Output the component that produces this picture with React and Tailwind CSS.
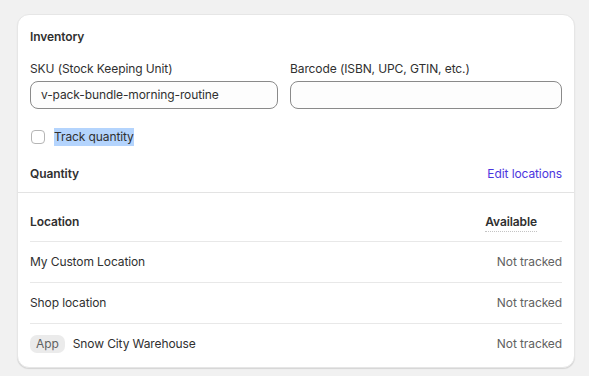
import React from 'react'

const locations = [
  { name: 'My Custom Location' },
  { name: 'Shop location' },
  { name: 'Snow City Warehouse', app: true },
]

function LocationRow({ loc }) {
  return (
    <div className="flex items-center justify-between h-[41px] border-t border-[#e8e8e8]">
      <div className="flex items-center gap-[8px]">
        {loc.app && (
          <span className="flex items-center h-[18px] px-[6px] rounded-[7px] bg-[#ebebeb] text-[12px] text-[#616161]">
            App
          </span>
        )}
        <span className="text-[#303030]">{loc.name}</span>
      </div>
      <span className="text-[#616161]">Not tracked</span>
    </div>
  )
}

export default function App() {
  return (
    <div
      className="min-h-[376px] bg-[#f1f1f1] pt-[14px] pl-[17px]"
      style={{ fontFamily: 'Inter, "Noto Sans", sans-serif' }}
    >
      <div className="w-[558px] bg-white rounded-[12px] border border-[#e6e6e6] shadow-[0_1px_1px_rgba(0,0,0,0.12)] text-[12px] tracking-[-0.1px] leading-[20px] text-[#303030]">
        <div className="px-[12px] pt-[12px] pb-[8px]">
          <h2 className="font-semibold">Inventory</h2>

          <div className="grid grid-cols-[248px_1fr] gap-[12px] mt-[12px]">
            <label className="flex flex-col gap-[2px]">
              <span>SKU (Stock Keeping Unit)</span>
              <div className="h-[28px] rounded-[8px] border border-[#8a8a8a] bg-[#fdfdfd] px-[10px] flex items-center">
                v-pack-bundle-morning-routine
              </div>
            </label>
            <label className="flex flex-col gap-[2px]">
              <span>Barcode (ISBN, UPC, GTIN, etc.)</span>
              <div className="h-[28px] rounded-[8px] border border-[#8a8a8a] bg-[#fdfdfd]" />
            </label>
          </div>

          <div className="flex items-center gap-[9px] mt-[18px] h-[20px]">
            <span className="ml-[1px] w-[14px] h-[14px] rounded-[4px] border border-[#b5b5b5] bg-white" />
            <span className="bg-[#b4d4fd] leading-[18px]">Track quantity</span>
          </div>

          <div className="flex items-center justify-between mt-[17px]">
            <span className="font-semibold">Quantity</span>
            <span className="text-[#4c35de]">Edit locations</span>
          </div>
        </div>

        <div className="border-t border-[#e3e3e3] px-[12px] pb-[3px]">
          <div className="flex items-center justify-between pt-[19px] pb-[9px]">
            <span className="font-semibold">Location</span>
            <span className="font-semibold mr-[25px] border-b border-dotted border-[#c4c4c4] leading-[18px]">
              Available
            </span>
          </div>
          {locations.map(loc => (
            <LocationRow key={loc.name} loc={loc} />
          ))}
        </div>
      </div>
    </div>
  )
}
